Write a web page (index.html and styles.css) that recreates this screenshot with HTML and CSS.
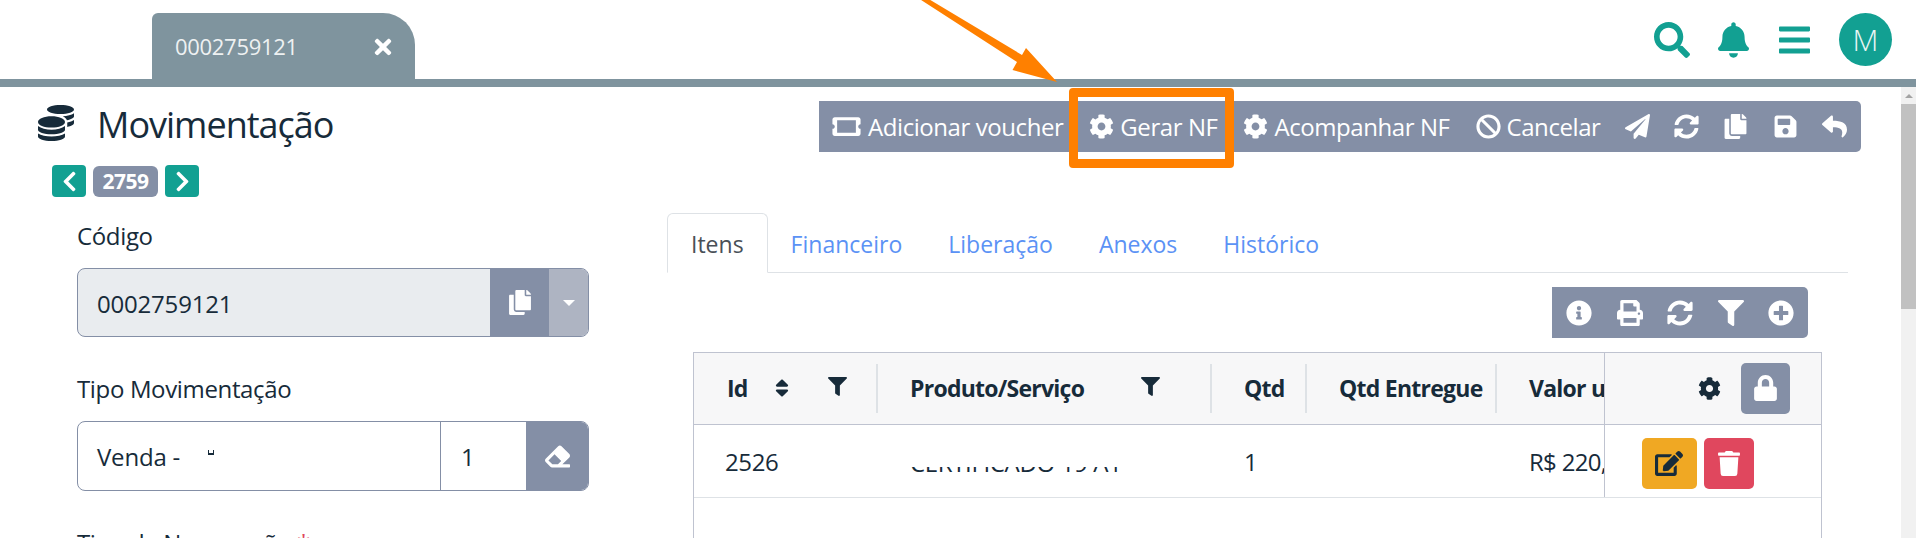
FILE: index.html
```html
<!DOCTYPE html>
<html lang="pt-BR">
<head>
    <meta charset="UTF-8">
    <title>Movimentação</title>
    <link rel="stylesheet" href="styles.css">
</head>
<body>
    <svg class="sprite" xmlns="http://www.w3.org/2000/svg">
        <symbol id="i-cog" viewBox="0 0 512 512"><path d="M487.4 315.7l-42.6-24.6c4.3-23.2 4.3-47 0-70.2l42.6-24.6c4.9-2.8 7.1-8.6 5.5-14-11.1-35.6-30-67.8-54.7-94.6-3.8-4.1-10-5.1-14.8-2.3L380.8 110c-17.9-15.4-38.5-27.3-60.8-35.1V25.8c0-5.6-3.9-10.5-9.4-11.7-36.7-8.2-74.3-7.8-109.2 0-5.5 1.2-9.4 6.1-9.4 11.7V75c-22.2 7.9-42.8 19.8-60.8 35.1L88.7 85.5c-4.9-2.8-11-1.9-14.8 2.3-24.7 26.7-43.6 58.9-54.7 94.6-1.7 5.4.6 11.2 5.5 14L67.3 221c-4.3 23.2-4.3 47 0 70.2l-42.6 24.6c-4.9 2.8-7.1 8.6-5.5 14 11.1 35.6 30 67.8 54.7 94.6 3.8 4.1 10 5.1 14.8 2.3l42.6-24.6c17.9 15.4 38.5 27.3 60.8 35.1v49.2c0 5.6 3.9 10.5 9.4 11.7 36.7 8.2 74.3 7.8 109.2 0 5.5-1.2 9.4-6.1 9.4-11.7v-49.2c22.2-7.9 42.8-19.8 60.8-35.1l42.6 24.6c4.9 2.8 11 1.9 14.8-2.3 24.7-26.7 43.6-58.9 54.7-94.6 1.5-5.5-.7-11.3-5.6-14.1zM256 336c-44.1 0-80-35.9-80-80s35.9-80 80-80 80 35.9 80 80-35.9 80-80 80z"/></symbol>
        <symbol id="i-search" viewBox="0 0 512 512"><path d="M505 442.7L405.3 343c-4.5-4.5-10.6-7-17-7H372c27.6-35.3 44-79.7 44-128C416 93.1 322.9 0 208 0S0 93.1 0 208s93.1 208 208 208c48.3 0 92.7-16.4 128-44v16.3c0 6.4 2.5 12.5 7 17l99.7 99.7c9.4 9.4 24.6 9.4 33.9 0l28.3-28.3c9.4-9.4 9.4-24.6.1-34zM208 336c-70.7 0-128-57.2-128-128 0-70.7 57.2-128 128-128 70.7 0 128 57.2 128 128 0 70.7-57.2 128-128 128z"/></symbol>
        <symbol id="i-bell" viewBox="0 0 448 512"><path d="M224 512c35.32 0 63.97-28.65 63.97-64H160.03c0 35.35 28.65 64 63.97 64zm215.39-149.71c-19.32-20.76-55.47-51.99-55.47-154.29 0-77.7-54.48-139.9-127.94-155.16V32c0-17.67-14.32-32-31.98-32s-31.98 14.33-31.98 32v20.84C118.56 68.1 64.08 130.3 64.08 208c0 102.3-36.15 133.53-55.47 154.29-6 6.45-8.66 14.16-8.61 21.71.11 16.4 12.98 32 32.1 32h383.8c19.12 0 32-15.6 32.1-32 .05-7.55-2.61-15.27-8.61-21.71z"/></symbol>
        <symbol id="i-bars" viewBox="0 0 448 512"><path d="M16 132h416c8.837 0 16-7.163 16-16V76c0-8.837-7.163-16-16-16H16C7.163 60 0 67.163 0 76v40c0 8.837 7.163 16 16 16zm0 160h416c8.837 0 16-7.163 16-16v-40c0-8.837-7.163-16-16-16H16c-8.837 0-16 7.163-16 16v40c0 8.837 7.163 16 16 16zm0 160h416c8.837 0 16-7.163 16-16v-40c0-8.837-7.163-16-16-16H16c-8.837 0-16 7.163-16 16v40c0 8.837 7.163 16 16 16z"/></symbol>
        <symbol id="i-times" viewBox="0 0 352 512"><path d="M242.72 256l100.07-100.07c12.28-12.28 12.28-32.19 0-44.48l-22.24-22.24c-12.28-12.28-32.19-12.28-44.48 0L176 189.28 75.93 89.21c-12.28-12.28-32.19-12.28-44.48 0L9.21 111.45c-12.28 12.28-12.28 32.19 0 44.48L109.28 256 9.21 356.07c-12.28 12.28-12.28 32.19 0 44.48l22.24 22.24c12.28 12.28 32.2 12.28 44.48 0L176 322.72l100.07 100.07c12.28 12.28 32.2 12.28 44.48 0l22.24-22.24c12.28-12.28 12.28-32.19 0-44.48L242.72 256z"/></symbol>
        <symbol id="i-coins" viewBox="0 0 512 512"><path d="M0 405.3V448c0 35.3 86 64 192 64s192-28.7 192-64v-42.7C342.7 434.4 267.2 448 192 448S41.3 434.4 0 405.3zM320 128c106 0 192-28.7 192-64S426 0 320 0 128 28.7 128 64s86 64 192 64zM0 300.4V352c0 35.3 86 64 192 64s192-28.7 192-64v-51.6c-41.3 34-116.9 51.6-192 51.6S41.3 334.4 0 300.4zm416 11c57.3-11.1 96-31.7 96-55.4v-42.7c-23.2 16.4-57.3 27.6-96 34.5v63.6zM192 160C86 160 0 195.8 0 240s86 80 192 80 192-35.8 192-80-86-80-192-80zm219.3 56.3c60-10.8 100.7-32 100.7-56.3v-42.7c-35.5 25.1-96.5 38.6-160.7 41.8 29.5 14.3 51.2 33.5 60 57.2z"/></symbol>
        <symbol id="i-ticket" viewBox="0 0 576 512"><path fill-rule="evenodd" d="M528 256c0 26.51 21.49 48 48 48v96c0 26.51-21.49 48-48 48H48c-26.51 0-48-21.49-48-48v-96c26.51 0 48-21.49 48-48s-21.49-48-48-48v-96c0-26.51 21.49-48 48-48h480c26.51 0 48 21.49 48 48v96c-26.51 0-48 21.49-48 48zM96 128v256h384V128z"/></symbol>
        <symbol id="i-ban" viewBox="0 0 512 512"><path d="M256 8C119.034 8 8 119.033 8 256s111.034 248 248 248 248-111.034 248-248S392.967 8 256 8zm130.108 117.892c65.448 65.448 70 165.481 20.677 235.637L150.47 105.216c70.204-49.356 170.226-44.735 235.638 20.676zM125.892 386.108c-65.448-65.448-70-165.481-20.677-235.637L361.53 406.784c-70.203 49.356-170.226 44.736-235.638-20.676z"/></symbol>
        <symbol id="i-send" viewBox="0 0 512 512"><path d="M476 3.2L12.5 270.6c-18.1 10.4-15.8 35.6 2.2 43.2L121 358.4l287.3-253.2c5.5-4.9 13.3 2.6 8.6 8.3L176 407v80.5c0 23.6 28.5 32.9 42.5 15.8L282 426l124.6 52.2c14.2 6 30.4-2.9 33-18.2l72-432C515 7.8 493.3-6.8 476 3.2z"/></symbol>
        <symbol id="i-sync" viewBox="0 0 512 512"><path d="M370.72 133.28C339.458 104.008 298.888 87.962 255.848 88c-77.458.068-144.328 53.178-162.791 126.85-1.344 5.363-6.122 9.15-11.651 9.15H24.103c-7.498 0-13.194-6.807-11.807-14.176C33.933 94.924 134.813 8 256 8c66.448 0 126.791 26.136 171.315 68.685L463.03 40.97C478.149 25.851 504 36.559 504 57.941V192c0 13.255-10.745 24-24 24H345.941c-21.382 0-32.09-25.851-16.971-40.971l41.75-41.749zM32 296h134.059c21.382 0 32.09 25.851 16.971 40.971l-41.75 41.75c31.262 29.273 71.835 45.319 114.876 45.28 77.418-.07 144.315-53.144 162.787-126.849 1.344-5.363 6.122-9.15 11.651-9.15h57.304c7.498 0 13.194 6.807 11.807 14.176C478.067 417.076 377.187 504 256 504c-66.448 0-126.791-26.136-171.315-68.685L48.97 471.03C33.851 486.149 8 475.441 8 454.059V320c0-13.255 10.745-24 24-24z"/></symbol>
        <symbol id="i-copy" viewBox="0 0 448 512"><path d="M320 448v40c0 13.255-10.745 24-24 24H24c-13.255 0-24-10.745-24-24V120c0-13.255 10.745-24 24-24h72v296c0 30.879 25.121 56 56 56h168zm0-344V0H152c-13.255 0-24 10.745-24 24v368c0 13.255 10.745 24 24 24h272c13.255 0 24-10.745 24-24V128H344c-13.2 0-24-10.8-24-24zm120.971-31.029L375.029 7.029A24 24 0 0 0 358.059 0H352v96h96v-6.059a24 24 0 0 0-7.029-16.97z"/></symbol>
        <symbol id="i-save" viewBox="0 0 448 512"><path d="M433.941 129.941l-83.882-83.882A48 48 0 0 0 316.118 32H48C21.49 32 0 53.49 0 80v352c0 26.51 21.49 48 48 48h352c26.51 0 48-21.49 48-48V163.882a48 48 0 0 0-14.059-33.941zM224 416c-35.346 0-64-28.654-64-64 0-35.346 28.654-64 64-64s64 28.654 64 64c0 35.346-28.654 64-64 64zm96-304.52V212c0 6.627-5.373 12-12 12H76c-6.627 0-12-5.373-12-12V108c0-6.627 5.373-12 12-12h228.52c3.183 0 6.235 1.264 8.485 3.515l3.48 3.48A11.996 11.996 0 0 1 320 111.48z"/></symbol>
        <symbol id="i-reply" viewBox="0 0 512 512"><path d="M8.309 189.836L184.313 37.851C199.719 24.546 224 35.347 224 56.015v80.053c160.629 1.839 288 34.032 288 186.258 0 61.441-39.581 122.309-83.333 154.132-13.653 9.931-33.111-2.533-28.077-18.631 45.344-145.012-21.507-183.51-176.59-185.742V360c0 20.7-24.3 31.453-39.687 18.164l-176.004-152c-11.071-9.562-11.086-26.753 0-36.328z"/></symbol>
        <symbol id="i-filter" viewBox="0 0 512 512"><path d="M487.976 0H24.028C2.71 0-8.047 25.866 7.058 40.971L192 225.941V432c0 7.831 3.821 15.17 10.237 19.662l80 55.98C298.02 518.69 320 507.493 320 487.98V225.941l184.947-184.97C520.021 25.896 509.338 0 487.976 0z"/></symbol>
        <symbol id="i-info" viewBox="0 0 512 512"><path d="M256 8C119.043 8 8 119.083 8 256c0 136.997 111.043 248 248 248s248-111.003 248-248C504 119.083 392.957 8 256 8zm0 110c23.196 0 42 18.804 42 42s-18.804 42-42 42-42-18.804-42-42 18.804-42 42-42zm56 254c0 6.627-5.373 12-12 12h-88c-6.627 0-12-5.373-12-12v-24c0-6.627 5.373-12 12-12h12v-64h-12c-6.627 0-12-5.373-12-12v-24c0-6.627 5.373-12 12-12h64c6.627 0 12 5.373 12 12v100h12c6.627 0 12 5.373 12 12v24z"/></symbol>
        <symbol id="i-print" viewBox="0 0 512 512"><path d="M448 192V77.25c0-8.49-3.37-16.62-9.37-22.63L393.37 9.37c-6-6-14.14-9.37-22.63-9.37H96C78.33 0 64 14.33 64 32v160c-35.35 0-64 28.65-64 64v112c0 8.84 7.16 16 16 16h48v96c0 17.67 14.33 32 32 32h320c17.67 0 32-14.33 32-32v-96h48c8.84 0 16-7.16 16-16V256c0-35.35-28.65-64-64-64zm-64 256H128v-96h256v96zm0-224H128V64h192v48c0 8.84 7.16 16 16 16h48v96zm48 72c-13.25 0-24-10.75-24-24 0-13.26 10.75-24 24-24s24 10.74 24 24c0 13.25-10.75 24-24 24z"/></symbol>
        <symbol id="i-plus" viewBox="0 0 512 512"><path d="M256 8C119 8 8 119 8 256s111 248 248 248 248-111 248-248S393 8 256 8zm144 276c0 6.6-5.4 12-12 12h-92v92c0 6.6-5.4 12-12 12h-56c-6.6 0-12-5.4-12-12v-92h-92c-6.6 0-12-5.4-12-12v-56c0-6.6 5.4-12 12-12h92v-92c0-6.6 5.4-12 12-12h56c6.6 0 12 5.4 12 12v92h92c6.6 0 12 5.4 12 12v56z"/></symbol>
        <symbol id="i-lock" viewBox="0 0 448 512"><path d="M400 224h-24v-72C376 68.2 307.8 0 224 0S72 68.2 72 152v72H48c-26.5 0-48 21.5-48 48v192c0 26.5 21.5 48 48 48h352c26.5 0 48-21.5 48-48V272c0-26.5-21.5-48-48-48zm-104 0H152v-72c0-39.7 32.3-72 72-72s72 32.3 72 72v72z"/></symbol>
        <symbol id="i-edit" viewBox="0 0 576 512"><path d="M402.6 83.2l90.2 90.2c3.8 3.8 3.8 10 0 13.8L274.4 405.6l-92.8 10.3c-12.4 1.4-22.9-9.1-21.5-21.5l10.3-92.8L388.8 83.2c3.8-3.8 10-3.8 13.8 0zm162-22.9l-48.8-48.8c-15.2-15.2-39.9-15.2-55.2 0l-35.4 35.4c-3.8 3.8-3.8 10 0 13.8l90.2 90.2c3.8 3.8 10 3.8 13.8 0l35.4-35.4c15.2-15.3 15.2-40 0-55.2zM384 346.2V448H64V128h229.8c3.2 0 6.2-1.3 8.5-3.5l40-40c7.6-7.6 2.2-20.5-8.5-20.5H48C21.5 64 0 85.5 0 112v352c0 26.5 21.5 48 48 48h352c26.5 0 48-21.5 48-48V306.2c0-10.7-12.9-16-20.5-8.5l-40 40c-2.2 2.3-3.5 5.3-3.5 8.5z"/></symbol>
        <symbol id="i-trash" viewBox="0 0 448 512"><path d="M432 32H312l-9.4-18.7A24 24 0 0 0 281.1 0H166.8a23.72 23.72 0 0 0-21.4 13.3L136 32H16A16 16 0 0 0 0 48v32a16 16 0 0 0 16 16h416a16 16 0 0 0 16-16V48a16 16 0 0 0-16-16zM53.2 467a48 48 0 0 0 47.9 45h245.8a48 48 0 0 0 47.9-45L416 128H32z"/></symbol>
        <symbol id="i-eraser" viewBox="0 0 512 512"><path d="M497.941 273.941c18.745-18.745 18.745-49.137 0-67.882l-160-160c-18.745-18.745-49.136-18.746-67.883 0l-256 256c-18.745 18.745-18.745 49.137 0 67.882l96 96A48.004 48.004 0 0 0 144 480h356c6.627 0 12-5.373 12-12v-40c0-6.627-5.373-12-12-12H355.883l142.058-142.059zm-302.627-62.627l137.373 137.373L265.373 416H150.628l-80-80 124.686-124.686z"/></symbol>
        <symbol id="i-left" viewBox="0 0 320 512"><path d="M34.52 239.03L228.87 44.69c9.37-9.37 24.57-9.37 33.94 0l22.67 22.67c9.36 9.36 9.37 24.52.04 33.9L131.49 256l154.02 154.75c9.34 9.38 9.32 24.54-.04 33.9l-22.67 22.67c-9.37 9.37-24.57 9.37-33.94 0L34.52 272.97c-9.37-9.37-9.37-24.57 0-33.94z"/></symbol>
        <symbol id="i-right" viewBox="0 0 320 512"><path d="M285.476 272.971L91.132 467.314c-9.373 9.373-24.569 9.373-33.941 0l-22.667-22.667c-9.357-9.357-9.375-24.522-.04-33.901L188.505 256 34.484 101.255c-9.335-9.379-9.317-24.544.04-33.901l22.667-22.667c9.373-9.373 24.569-9.373 33.941 0L285.475 239.03c9.373 9.372 9.373 24.568.001 33.941z"/></symbol>
        <symbol id="i-sort" viewBox="0 0 320 512"><path d="M41 288h238c21.4 0 32.1 25.9 17 41L177 448c-9.4 9.4-24.6 9.4-33.9 0L24 329c-15.1-15.1-4.4-41 17-41zm255-105L177 64c-9.4-9.4-24.6-9.4-33.9 0L24 183c-15.1 15.1-4.4 41 17 41h238c21.4 0 32.1-25.9 17-41z"/></symbol>
    </svg>

    <header class="topbar">
        <div class="tab-open">
            <span>0002759121</span>
            <svg class="tab-close"><use href="#i-times"/></svg>
        </div>
        <div class="top-icons">
            <svg class="top-search"><use href="#i-search"/></svg>
            <svg class="top-bell"><use href="#i-bell"/></svg>
            <svg class="top-bars"><use href="#i-bars"/></svg>
            <div class="avatar">M</div>
        </div>
    </header>
    <div class="topline"></div>

    <div class="page">
        <main class="content">
            <div class="title-row">
                <h1 class="title">
                    <svg class="title-icon"><use href="#i-coins"/></svg>
                    Movimentação
                </h1>
                <div class="toolbar">
                    <span class="tool tool-voucher"><svg class="ic-ticket"><use href="#i-ticket"/></svg>Adicionar voucher</span>
                    <span class="tool tool-nf"><svg class="ic"><use href="#i-cog"/></svg>Gerar NF</span>
                    <span class="tool tool-track"><svg class="ic"><use href="#i-cog"/></svg>Acompanhar NF</span>
                    <span class="tool tool-cancel"><svg class="ic"><use href="#i-ban"/></svg>Cancelar</span>
                    <span class="tool tool-icon"><svg class="ic"><use href="#i-send"/></svg></span>
                    <span class="tool tool-icon"><svg class="ic"><use href="#i-sync"/></svg></span>
                    <span class="tool tool-icon"><svg class="ic"><use href="#i-copy"/></svg></span>
                    <span class="tool tool-icon"><svg class="ic"><use href="#i-save"/></svg></span>
                    <span class="tool tool-icon"><svg class="ic"><use href="#i-reply"/></svg></span>
                </div>
            </div>

            <div class="pager">
                <span class="pager-btn"><svg><use href="#i-left"/></svg></span>
                <span class="pager-num">2759</span>
                <span class="pager-btn"><svg><use href="#i-right"/></svg></span>
            </div>

            <div class="columns">
                <section class="form-col">
                    <label class="field-label">Código</label>
                    <div class="input-group input-locked">
                        <span class="input-value">0002759121</span>
                        <span class="addon addon-copy"><svg><use href="#i-copy"/></svg></span>
                        <span class="addon addon-caret"><i class="caret"></i></span>
                    </div>

                    <label class="field-label">Tipo Movimentação</label>
                    <div class="input-group">
                        <span class="input-value">Venda -<i class="smudge"></i></span>
                        <span class="input-num">1</span>
                        <span class="addon addon-erase"><svg><use href="#i-eraser"/></svg></span>
                    </div>

                    <label class="field-label">Tipo de Numeração <em class="required">*</em></label>
                </section>

                <section class="detail-col">
                    <nav class="tabs">
                        <a class="tab-link active">Itens</a>
                        <a class="tab-link">Financeiro</a>
                        <a class="tab-link">Liberação</a>
                        <a class="tab-link">Anexos</a>
                        <a class="tab-link">Histórico</a>
                    </nav>

                    <div class="mini-row">
                        <div class="mini-toolbar">
                            <svg><use href="#i-info"/></svg>
                            <svg><use href="#i-print"/></svg>
                            <svg><use href="#i-sync"/></svg>
                            <svg><use href="#i-filter"/></svg>
                            <svg><use href="#i-plus"/></svg>
                        </div>
                    </div>

                    <div class="table-box">
                        <table class="grid">
                            <colgroup>
                                <col class="c-id"><col class="c-prod"><col class="c-qtd"><col class="c-ent"><col class="c-val"><col class="c-act">
                            </colgroup>
                            <thead>
                                <tr>
                                    <th><div class="th-in">Id<svg class="th-sort"><use href="#i-sort"/></svg><svg class="th-filter"><use href="#i-filter"/></svg></div></th>
                                    <th><div class="th-in">Produto/Serviço<svg class="th-filter"><use href="#i-filter"/></svg></div></th>
                                    <th><div class="th-in">Qtd</div></th>
                                    <th><div class="th-in">Qtd Entregue</div></th>
                                    <th class="cut">Valor unitário</th>
                                    <th class="actions-head">
                                        <div class="th-actions">
                                            <svg class="th-gear"><use href="#i-cog"/></svg>
                                            <span class="lock-btn"><svg><use href="#i-lock"/></svg></span>
                                        </div>
                                    </th>
                                </tr>
                            </thead>
                            <tbody>
                                <tr>
                                    <td>2526</td>
                                    <td class="masked-cell"><div class="masked"><span>CERTIFICADO 19 A1</span></div></td>
                                    <td>1</td>
                                    <td></td>
                                    <td class="cut">R$ 220,00</td>
                                    <td class="actions-cell">
                                        <div class="row-actions">
                                            <span class="btn-edit"><svg><use href="#i-edit"/></svg></span>
                                            <span class="btn-del"><svg><use href="#i-trash"/></svg></span>
                                        </div>
                                    </td>
                                </tr>
                            </tbody>
                        </table>
                    </div>
                </section>
            </div>
        </main>

        <aside class="scrollbar">
            <i class="scroll-up"></i>
            <div class="scroll-thumb"></div>
        </aside>
    </div>

    <!-- marcacao por cima da tela -->
    <svg class="arrow" viewBox="0 0 160 90" xmlns="http://www.w3.org/2000/svg">
        <polygon points="18,-2 27,-2 122,55 126,48 157,82 112.5,70 117,62"/>
    </svg>
    <div class="highlight"></div>
</body>
</html>
```

FILE: styles.css
```css
* {
    box-sizing: border-box;
}
html, body {
    height: 538px;
    overflow: hidden;
}
body {
    margin: 0;
    position: relative;
    font-family: "Open Sans", "Noto Sans", sans-serif;
    font-size: 24px;
    color: #172b3a;
    background: #fff;
}
.sprite {
    display: none;
}
svg {
    fill: currentColor;
    display: block;
    flex: none;
}

/* topo */
.topbar {
    height: 79px;
    display: flex;
    justify-content: space-between;
    align-items: flex-end;
    padding: 0 24px 0 152px;
}
.tab-open {
    width: 263px;
    height: 66px;
    background: #7f949e;
    border-radius: 6px 32px 0 0;
    color: #eef1f2;
    display: flex;
    align-items: center;
    padding: 0 23px;
    font-size: 22px;
    letter-spacing: -0.3px;
}
.tab-close {
    width: 20px;
    height: 24px;
    margin-left: 75px;
    margin-top: 2px;
    color: #fff;
}
.top-icons {
    display: flex;
    align-items: center;
    color: #12a092;
    height: 79px;
}
.top-search {
    width: 36px;
    height: 36px;
}
.top-bell {
    width: 31px;
    height: 36px;
    margin-left: 28px;
}
.top-bars {
    width: 31px;
    height: 36px;
    margin-left: 30px;
}
.avatar {
    width: 53px;
    height: 53px;
    margin-left: 29px;
    border-radius: 50%;
    background: #12a092;
    color: #eaf6f4;
    font-size: 30px;
    font-weight: 300;
    display: flex;
    align-items: center;
    justify-content: center;
}
.topline {
    height: 8px;
    background: #7f949e;
}

.page {
    display: flex;
    height: 451px;
    overflow: hidden;
}
.content {
    flex: 1;
    min-width: 0;
}
.scrollbar {
    width: 15px;
    background: #f1f1f1;
    display: flex;
    flex-direction: column;
    align-items: center;
    padding-top: 7px;
}
.scroll-up {
    width: 0;
    height: 0;
    border-left: 4px solid transparent;
    border-right: 4px solid transparent;
    border-bottom: 4px solid #a3a3a3;
}
.scroll-thumb {
    width: 100%;
    height: 205px;
    margin-top: 6px;
    background: #c1c1c1;
}

/* titulo e barra de acoes */
.title-row {
    display: flex;
    justify-content: space-between;
    align-items: flex-start;
    padding: 14px 40px 0 37px;
}
.title {
    margin: 2px 0 0;
    display: flex;
    align-items: center;
    font-size: 36px;
    font-weight: 500;
    line-height: 44px;
    letter-spacing: -1px;
}
.title-icon {
    width: 38px;
    height: 36px;
    margin-right: 22px;
    margin-top: -4px;
}
.toolbar {
    height: 51px;
    width: 1042px;
    background: #848fa6;
    border-radius: 0 5px 5px 0;
    color: #fff;
    display: flex;
    align-items: center;
    padding-left: 13px;
    font-size: 24px;
    letter-spacing: -0.43px;
}
.tool {
    display: flex;
    align-items: center;
}
.ic {
    width: 25px;
    height: 25px;
    margin-right: 6px;
}
.ic-ticket {
    width: 29px;
    height: 25px;
    margin-right: 7px;
}
.tool-nf,
.tool-track,
.tool-cancel {
    margin-left: 26px;
}
.tool-icon .ic {
    margin-right: 0;
}
.tool-icon {
    margin-left: 24.3px;
}

/* paginacao */
.pager {
    display: flex;
    align-items: center;
    gap: 7px;
    margin-top: 13px;
    padding-left: 52px;
}
.pager-btn {
    width: 34px;
    height: 32px;
    border-radius: 4px;
    background: #12a092;
    color: #fff;
    display: flex;
    align-items: center;
    justify-content: center;
}
.pager-btn svg {
    width: 15px;
    height: 23px;
}
.pager-num {
    width: 65px;
    height: 31px;
    border-radius: 6px;
    background: #848fa6;
    color: #fff;
    font-size: 21px;
    font-weight: 700;
    display: flex;
    align-items: center;
    justify-content: center;
    letter-spacing: -0.5px;
}

.columns {
    display: flex;
    margin-top: 16px;
    padding-left: 77px;
}

/* formulario */
.form-col {
    width: 512px;
    padding-top: 9px;
    margin-right: 78px;
}
.field-label {
    display: block;
    height: 30px;
    line-height: 28px;
    margin-bottom: 16px;
    letter-spacing: -0.35px;
}
.required {
    color: #e0475e;
    font-style: normal;
}
.input-group {
    display: flex;
    height: 69px;
    border: 1px solid #848fa6;
    border-radius: 8px;
    overflow: hidden;
    margin-bottom: 38px;
    letter-spacing: -0.2px;
}
.input-locked {
    background: #e9ecef;
}
.input-locked .input-value {
    padding-top: 2px;
}
.input-group + .field-label + .input-group {
    height: 70px;
}
.input-value {
    flex: 1;
    display: flex;
    align-items: center;
    padding-left: 19px;
}
.smudge {
    width: 6px;
    height: 5px;
    margin: -7px 0 0 28px;
    border: 1px solid #172b3a;
    border-width: 0 1px 2px 1px;
}
.input-num {
    width: 86px;
    display: flex;
    align-items: center;
    padding-left: 20px;
    border-left: 1px solid #848fa6;
}
.addon {
    display: flex;
    align-items: center;
    justify-content: center;
    color: #fff;
}
.addon-copy {
    width: 59px;
    background: #848fa6;
}
.addon-copy svg {
    width: 22px;
    height: 25px;
}
.addon-caret {
    width: 39px;
    background: #aeb4c2;
}
.caret {
    border-left: 6px solid transparent;
    border-right: 6px solid transparent;
    border-top: 6px solid #fff;
}
.addon-erase {
    width: 62px;
    background: #848fa6;
}
.addon-erase svg {
    width: 25px;
    height: 25px;
}

/* abas */
.detail-col {
    width: 1181px;
}
.tabs {
    display: flex;
    height: 60px;
    border-bottom: 1px solid #dee2e6;
}
.tab-link {
    height: 60px;
    padding: 2px 23px 0;
    line-height: 58px;
    color: #5b92f5;
    font-size: 23px;
}
.tab-link.active {
    color: #495057;
    background: #fff;
    border: 1px solid #dee2e6;
    border-bottom-color: #fff;
    border-radius: 6px 6px 0 0;
    line-height: 56px;
}
.mini-row {
    display: flex;
    justify-content: flex-end;
    margin-top: 14px;
    padding-right: 40px;
}
.mini-toolbar {
    width: 256px;
    height: 51px;
    background: #848fa6;
    border-radius: 0 5px 5px 0;
    color: #fff;
    display: flex;
    align-items: center;
    justify-content: space-between;
    padding: 0 14px;
}
.mini-toolbar svg {
    width: 26px;
    height: 26px;
}

/* tabela */
.table-box {
    width: 1129px;
    height: 300px;
    margin: 14px 0 0 26px;
    border: 1px solid #bfc3d0;
    border-bottom: 0;
}
.grid {
    width: 1127px;
    table-layout: fixed;
    border-collapse: collapse;
}
.c-id { width: 184px; }
.c-prod { width: 334px; }
.c-qtd { width: 95px; }
.c-ent { width: 190px; }
.c-val { width: 107px; }
.grid th {
    height: 71px;
    padding: 0;
    background: #f7f7f8;
    border-bottom: 1px solid #bfc3d0;
    text-align: left;
    font-size: 23px;
    font-weight: 700;
    letter-spacing: -0.75px;
    white-space: nowrap;
}
.th-in {
    height: 49px;
    padding-left: 32px;
    display: flex;
    align-items: center;
    border-right: 2px solid #dee2e6;
}
.grid th:first-child .th-in {
    padding-left: 33px;
}
.th-sort {
    width: 14px;
    height: 22px;
    margin-left: 27px;
}
.th-filter {
    width: 19px;
    height: 19px;
    margin-left: 57px;
    margin-top: -4px;
}
.th-in .th-sort + .th-filter {
    margin-left: 39px;
}
.grid td {
    height: 73px;
    padding: 2px 0 0 32px;
    border-bottom: 1px solid #dee2e6;
    letter-spacing: -0.35px;
    white-space: nowrap;
}
.grid th.cut,
.grid td.cut {
    overflow: hidden;
    padding-left: 32px;
}
.grid td.cut {
    letter-spacing: -0.7px;
}
.grid td:first-child {
    padding-left: 31px;
}
.grid td.masked-cell {
    vertical-align: top;
    padding-top: 42px;
}
.masked {
    height: 5px;
    overflow: hidden;
}
.masked span {
    display: block;
    line-height: 30px;
    margin-top: -19px;
}
.actions-head,
.actions-cell {
    border-left: 1px solid #bfc3d0;
}
.th-actions {
    display: flex;
    align-items: center;
    padding-left: 93px;
}
.th-gear {
    width: 23px;
    height: 23px;
}
.lock-btn {
    width: 49px;
    height: 51px;
    margin-left: 20px;
    border-radius: 5px;
    background: #848fa6;
    color: #fff;
    display: flex;
    align-items: center;
    justify-content: center;
}
.lock-btn svg {
    width: 23px;
    height: 26px;
}
.grid td.actions-cell {
    padding: 0;
}
.row-actions {
    display: flex;
    gap: 7px;
    padding: 6px 0 0 37px;
}
.btn-edit,
.btn-del {
    height: 51px;
    border-radius: 5px;
    display: flex;
    align-items: center;
    justify-content: center;
}
.btn-edit {
    width: 55px;
    background: #f0a823;
}
.btn-edit svg {
    width: 28px;
    height: 25px;
}
.btn-del {
    width: 50px;
    background: #e0475e;
    color: #fff;
}
.btn-del svg {
    width: 22px;
    height: 25px;
}

/* seta e quadro laranja por cima da tela */
.arrow {
    position: absolute;
    left: 900px;
    top: 0;
    width: 160px;
    height: 90px;
    fill: #ff8000;
}
.highlight {
    position: absolute;
    left: 1069px;
    top: 88px;
    width: 165px;
    height: 80px;
    border: 9px solid #ff8000;
    border-radius: 4px;
}
```
